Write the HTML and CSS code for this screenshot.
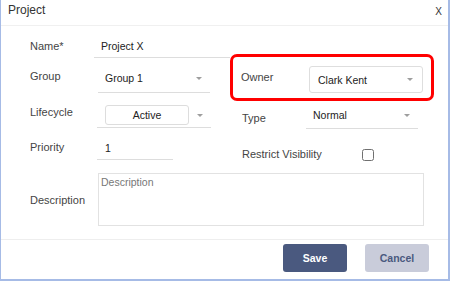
FILE: index.html
```html
<!DOCTYPE html>
<html>
<head>
<meta charset="utf-8">
<link rel="stylesheet" href="styles.css">
</head>
<body>
<div class="dialog">
  <header class="head">
    <span class="title">Project</span>
    <span class="close">X</span>
  </header>
  <div class="body">
    <div class="top">
      <div class="col-left">
        <div class="row row-name">
          <span class="label">Name*</span>
          <div class="field field-name">Project X</div>
        </div>
        <div class="row row-group">
          <span class="label">Group</span>
          <div class="field field-select field-group"><span>Group 1</span><span class="caret"></span></div>
        </div>
        <div class="row row-life">
          <span class="label">Lifecycle</span>
          <div class="field field-select field-life"><span class="chip">Active</span><span class="caret"></span></div>
        </div>
        <div class="row row-prio">
          <span class="label">Priority</span>
          <div class="field field-prio">1</div>
        </div>
      </div>
      <div class="col-right">
        <div class="highlight">
          <span class="label label-owner">Owner</span>
          <div class="select-box"><span>Clark Kent</span><span class="caret"></span></div>
        </div>
        <div class="row row-type">
          <span class="label label-type">Type</span>
          <div class="field field-select field-type"><span>Normal</span><span class="caret"></span></div>
        </div>
        <div class="row row-restrict">
          <span class="label label-restrict">Restrict Visibility</span>
          <span class="checkbox"></span>
        </div>
      </div>
    </div>
    <div class="desc-row">
      <span class="label label-desc">Description</span>
      <textarea class="desc" placeholder="Description"></textarea>
    </div>
  </div>
  <footer class="foot">
    <button class="btn btn-save">Save</button>
    <button class="btn btn-cancel">Cancel</button>
  </footer>
</div>
</body>
</html>
```

FILE: styles.css
```css
html, body {
  margin: 0;
  padding: 0;
  background: #ffffff;
}

body {
  font-family: "Liberation Sans", Arial, sans-serif;
}

.dialog {
  width: 450px;
  height: 281px;
  box-sizing: border-box;
  border-left: 1px solid #a6bbe6;
  border-right: 2px solid #a6bbe6;
  border-bottom: 2px solid #a6bbe6;
  background: #ffffff;
  display: flex;
  flex-direction: column;
}

.head {
  height: 25px;
  border-bottom: 1px solid #f0f0f0;
  display: flex;
  justify-content: space-between;
  align-items: flex-start;
  padding: 0 6px 0 7px;
}

.title {
  font-size: 12px;
  line-height: 20px;
  color: #333333;
}

.close {
  font-size: 10px;
  line-height: 20px;
  margin-top: 2px;
  color: #333333;
}

.body {
  padding-left: 29px;
}

.top {
  display: flex;
}

.col-left {
  width: 200px;
  display: flex;
  flex-direction: column;
}

.col-right {
  width: 204px;
  display: flex;
  flex-direction: column;
}

.row {
  display: flex;
  align-items: flex-start;
}

.label {
  flex: none;
  width: 64px;
  font-size: 11px;
  line-height: 20px;
  color: #444444;
}

.field {
  box-sizing: border-box;
  font-size: 10.5px;
  line-height: 20px;
  color: #222222;
  border-bottom: 1px solid #dddddd;
  padding: 0 7px;
}

.field-select {
  display: flex;
  justify-content: space-between;
  align-items: center;
  padding-right: 8px;
}

.caret {
  width: 0;
  height: 0;
  border-left: 3px solid transparent;
  border-right: 3px solid transparent;
  border-top: 3px solid #9e9e9e;
}

.row-name {
  margin-top: 10px;
}

.field-name {
  width: 136px;
  padding-bottom: 1px;
}

.row-group {
  margin-top: 8px;
}

.field-group {
  margin-left: 4px;
  width: 112px;
  padding-top: 2px;
  padding-bottom: 4px;
}

.row-life {
  margin-top: 9px;
}

.field-life {
  margin-left: 3px;
  width: 114px;
  padding-top: 3px;
  padding-bottom: 2px;
  padding-left: 8px;
}

.chip {
  box-sizing: border-box;
  width: 84px;
  height: 20px;
  line-height: 18px;
  border: 1px solid #dddddd;
  border-radius: 3px;
  text-align: center;
}

.row-prio {
  margin-top: 9px;
}

.field-prio {
  margin-left: 3px;
  width: 76px;
  padding: 1px 8px;
}

.highlight {
  margin-top: 28px;
  border: 3px solid #ff0000;
  border-radius: 7px;
  padding: 9px 8px 5px 8px;
  display: flex;
  align-items: flex-start;
}

.label-owner {
  width: 68px;
  margin-top: 1px;
}

.select-box {
  box-sizing: border-box;
  width: 114px;
  height: 27px;
  border: 1px solid #dedede;
  border-radius: 3px;
  padding: 0 9px 0 8px;
  display: flex;
  justify-content: space-between;
  align-items: center;
  font-size: 10.5px;
  color: #222222;
}

.row-type {
  margin-top: 4px;
  padding-left: 12px;
}

.label-type {
  margin-top: 3px;
}

.field-type {
  width: 112px;
  padding-bottom: 3px;
}

.row-restrict {
  margin-top: 15px;
  padding-left: 12px;
}

.label-restrict {
  width: 120px;
}

.checkbox {
  box-sizing: border-box;
  width: 12px;
  height: 12px;
  margin-top: 5px;
  border: 1.5px solid #707070;
  border-radius: 2.5px;
}

.desc-row {
  margin-top: 9px;
  display: flex;
  align-items: center;
}

.label-desc {
  width: 68px;
}

.desc {
  box-sizing: border-box;
  width: 326px;
  height: 53px;
  margin: 0;
  border: 1px solid #e2e2e2;
  border-radius: 0;
  padding: 1px 2px;
  font-family: "Liberation Sans", Arial, sans-serif;
  font-size: 10.5px;
  line-height: 14px;
  color: #222222;
  resize: none;
  outline: none;
}

.desc::placeholder {
  color: #777777;
}

.foot {
  margin-top: 13px;
  border-top: 1px solid #eeeeee;
  padding: 4px 19px 0 0;
  display: flex;
  justify-content: flex-end;
  gap: 18px;
}

.btn {
  width: 64px;
  height: 28px;
  border: none;
  border-radius: 3px;
  font-family: "Liberation Sans", Arial, sans-serif;
  font-size: 10.5px;
  font-weight: bold;
  padding: 0;
}

.btn-save {
  background: #4a597f;
  color: #ffffff;
}

.btn-cancel {
  background: #c9ccda;
  color: #4a597f;
}
```
